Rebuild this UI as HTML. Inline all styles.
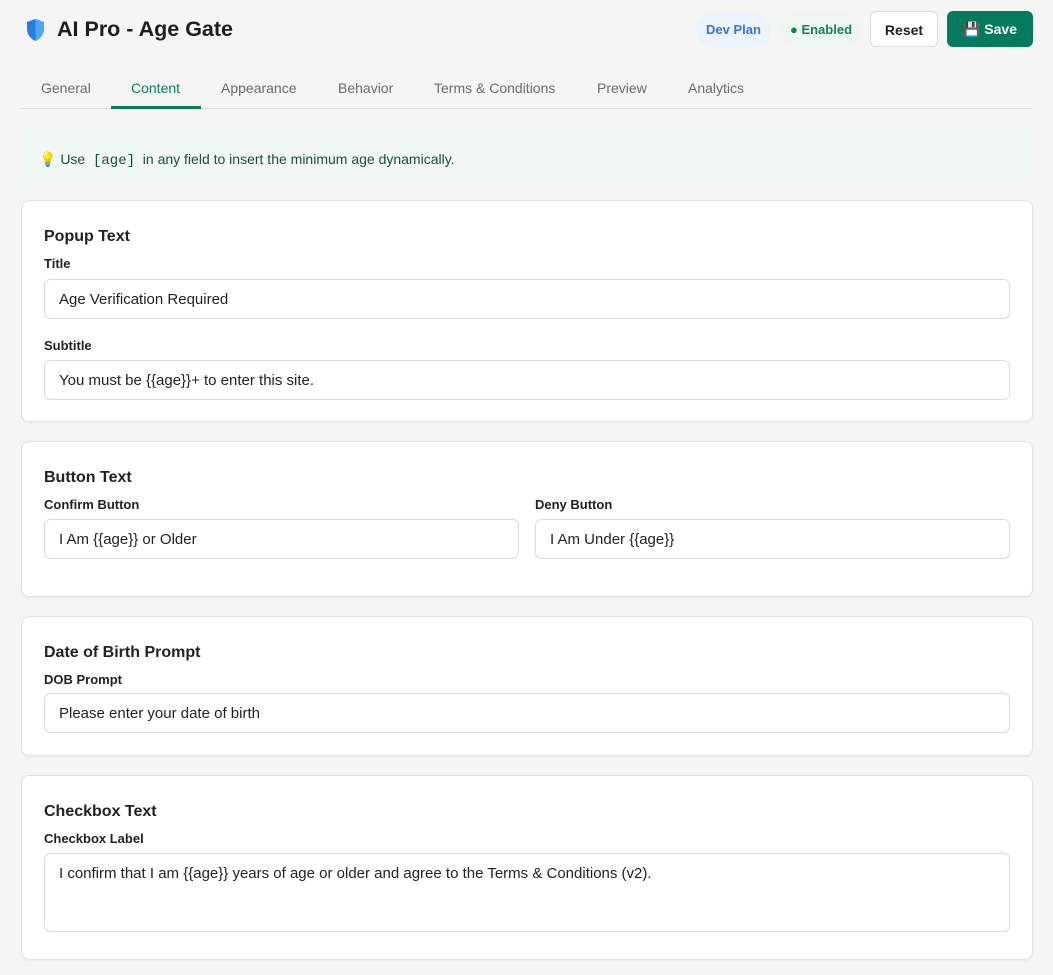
<!DOCTYPE html>
<html><head><meta charset="utf-8"><style>
*{box-sizing:border-box;margin:0;padding:0}
body{width:1053px;height:975px;background:#f5f5f5;font-family:"Liberation Sans",sans-serif;color:#1f1f1f;position:relative;overflow:hidden}
.a{position:absolute}
.title{left:57px;top:17px;font-size:21.5px;font-weight:bold;color:#1d1d1d}
.pill{top:13px;height:34px;border-radius:17px;font-size:13px;font-weight:bold;line-height:34px;text-align:center}
.btn{top:11px;height:36px;border-radius:6px;font-size:14px;font-weight:bold;line-height:36px;text-align:center}
.tab{top:80px;font-size:14px;color:#6b6b6b}
.card{left:21px;width:1012px;background:#fff;border:1px solid #e2e2e2;border-radius:8px;box-shadow:0 1px 2px rgba(0,0,0,.05)}
.h{font-size:16px;font-weight:bold;color:#222;left:44px}
.l{font-size:13px;font-weight:bold;color:#222}
.in{height:40px;border:1px solid #dcdcdc;border-radius:6px;background:#fff;font-size:15px;padding-left:14px;line-height:40px;color:#222}
</style></head><body>
<svg class="a" style="left:25px;top:18px" width="21" height="24" viewBox="0 0 21 24"><path d="M10.5 1 L19 4 V11 C19 17 15 21 10.5 23 C6 21 2 17 2 11 V4 Z" fill="#4aa8f5"/><path d="M10.5 1 L2 4 V11 C2 17 6 21 10.5 23 Z" fill="#2a7de0"/></svg>
<div class="a title">AI Pro - Age Gate</div>
<div class="a pill" style="left:696px;width:75px;background:#eaf3fe;color:#3b73d4">Dev Plan</div>
<div class="a pill" style="left:781px;width:80px;background:#eef6f1;color:#15805a">● Enabled</div>
<div class="a btn" style="left:870px;width:68px;background:#fff;border:1px solid #dcdcdc;color:#222">Reset</div>
<div class="a btn" style="left:947px;width:86px;background:#047b5c;color:#fff">💾 Save</div>
<div class="a tab" style="left:41px">General</div>
<div class="a tab" style="left:131px;color:#0c7a5c">Content</div>
<div class="a tab" style="left:221px">Appearance</div>
<div class="a tab" style="left:338px">Behavior</div>
<div class="a tab" style="left:434px">Terms &amp; Conditions</div>
<div class="a tab" style="left:597px">Preview</div>
<div class="a tab" style="left:688px">Analytics</div>
<div class="a" style="left:21px;top:108px;width:1012px;height:1px;background:#e0e0e0"></div>
<div class="a" style="left:111px;top:106px;width:90px;height:3px;background:#0c7a5c"></div>
<div class="a" style="left:21px;top:128px;width:1012px;height:57px;background:#f0f7f4;border-radius:6px"></div>
<div class="a" style="left:39px;top:151px;font-size:14px;color:#1b4d3e">💡 Use &nbsp;<span style="font-family:'Liberation Mono',monospace">[age]</span>&nbsp; in any field to insert the minimum age dynamically.</div>

<div class="a card" style="top:200px;height:222px"></div>
<div class="a h" style="top:228px">Popup Text</div>
<div class="a l" style="left:44px;top:256px">Title</div>
<div class="a in" style="left:44px;top:279px;width:966px">Age Verification Required</div>
<div class="a l" style="left:44px;top:338px">Subtitle</div>
<div class="a in" style="left:44px;top:360px;width:966px">You must be {{age}}+ to enter this site.</div>

<div class="a card" style="top:441px;height:156px"></div>
<div class="a h" style="top:469px">Button Text</div>
<div class="a l" style="left:44px;top:497px">Confirm Button</div>
<div class="a in" style="left:44px;top:519px;width:475px">I Am {{age}} or Older</div>
<div class="a l" style="left:535px;top:497px">Deny Button</div>
<div class="a in" style="left:535px;top:519px;width:475px">I Am Under {{age}}</div>

<div class="a card" style="top:616px;height:140px"></div>
<div class="a h" style="top:644px">Date of Birth Prompt</div>
<div class="a l" style="left:44px;top:672px">DOB Prompt</div>
<div class="a in" style="left:44px;top:693px;width:966px">Please enter your date of birth</div>

<div class="a card" style="top:775px;height:185px"></div>
<div class="a h" style="top:803px">Checkbox Text</div>
<div class="a l" style="left:44px;top:831px">Checkbox Label</div>
<div class="a in" style="left:44px;top:853px;width:966px;height:79px;line-height:20px;padding-top:10px">I confirm that I am {{age}} years of age or older and agree to the Terms &amp; Conditions (v2).</div>
</body></html>
